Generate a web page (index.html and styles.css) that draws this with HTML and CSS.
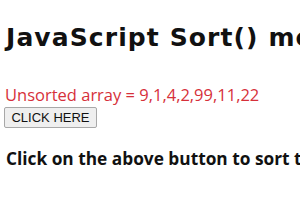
FILE: index.html
```html
<!DOCTYPE html>
<html lang="en">
<head>
    <meta charset="UTF-8">
    <title>JavaScript Sort() method</title>
    <link rel="stylesheet" href="styles.css">
</head>
<body>
    <h1>JavaScript Sort() method</h1>
    <div class="sample">Unsorted array = 9,1,4,2,99,11,22</div>
    <button class="btn">CLICK HERE</button>
    <h3>Click on the above button to sort the array</h3>
</body>
</html>
```

FILE: styles.css
```css
body {
    font-family: "Open Sans", "Noto Sans", sans-serif;
    margin: 0;
    padding: 0 6px;
    white-space: nowrap;
    overflow: hidden;
    color: #111;
}
h1 {
    font-family: "DejaVu Sans", "Open Sans", sans-serif;
    font-size: 25px;
    font-weight: 700;
    letter-spacing: 1.1px;
    margin: 23px 0 32px;
    line-height: 30px;
}
.sample {
    color: #d6303a;
    font-size: 16.5px;
    line-height: 20px;
    margin-left: -1px;
}
.btn {
    display: block;
    font-family: "Liberation Sans", Arial, sans-serif;
    font-size: 13px;
    width: 93px;
    height: 21px;
    padding: 0;
    margin: 2px 0 0 -2px;
    background: #efefef;
    border: 1px solid #a8a8a8;
    border-radius: 2px;
    color: #111;
}
h3 {
    font-size: 17.3px;
    font-weight: 700;
    margin: 20px 0 0;
    line-height: 22px;
}
```
